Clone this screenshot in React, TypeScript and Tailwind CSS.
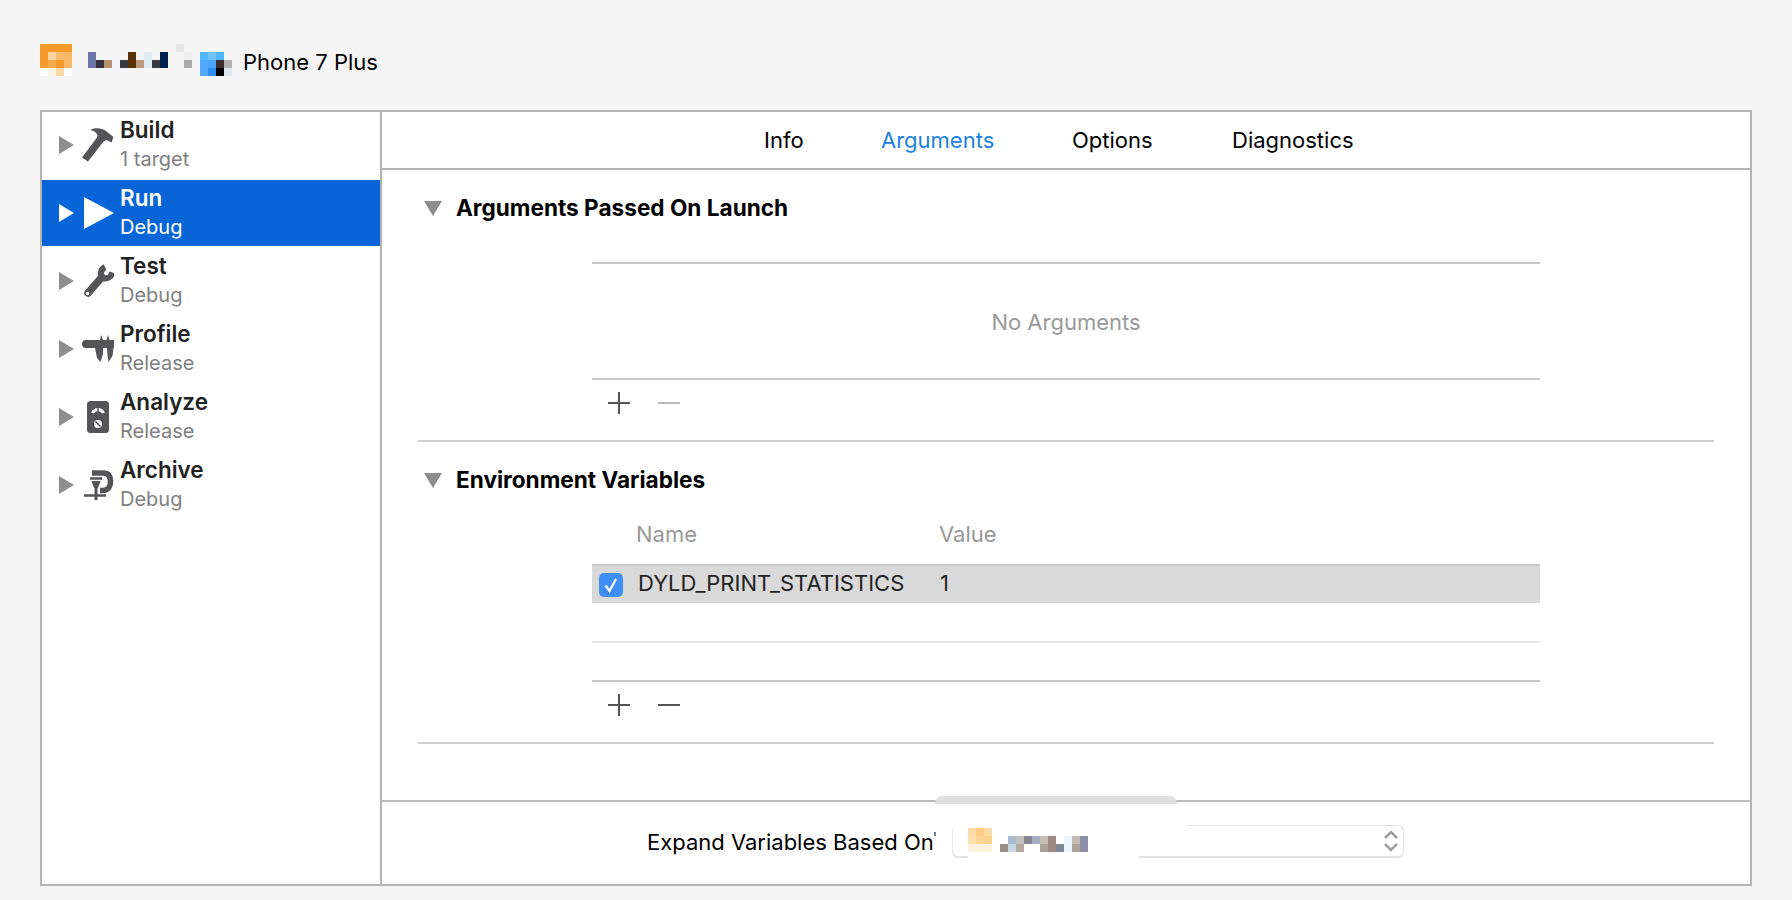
import React from "react";

const gray = "#555558";

function Mosaic({ width, height, cells, className }: { width: number; height: number; cells: [number, number, string][]; className?: string }) {
  return (
    <svg width={width} height={height} viewBox={`0 0 ${width} ${height}`} className={className} shapeRendering="crispEdges">
      {cells.map(([x, y, c], i) => (
        <rect key={i} x={x} y={y} width={8} height={8} fill={c} />
      ))}
    </svg>
  );
}

const headerCells: [number, number, string][] = [
  [0, 4, "#f79a2c"], [8, 4, "#f79a2c"], [16, 4, "#f79a2c"], [24, 4, "#f79a2c"],
  [0, 12, "#f79a2c"], [8, 12, "#fbd59f"], [16, 12, "#fbbb6d"], [24, 12, "#fab868"],
  [0, 20, "#f79a2c"], [8, 20, "#f9ac4e"], [16, 20, "#f79a2c"], [24, 20, "#fab868"],
  [0, 28, "#ffffff"], [8, 28, "#fff4e3"], [16, 28, "#fdd8a5"], [24, 28, "#ffffff"],
  [48, 12, "#6a79a8"], [48, 20, "#6a79a8"], [56, 20, "#33353c"], [64, 20, "#ba9372"], [72, 20, "#eef4f8"],
  [80, 20, "#3a3b40"], [88, 12, "#5a3007"], [88, 20, "#5a3007"], [96, 20, "#c19a7d"],
  [104, 12, "#dcecf4"], [104, 20, "#dcecf4"], [112, 20, "#3a3b40"], [120, 12, "#012050"], [120, 20, "#012050"],
  [136, 4, "#e6e6e6"], [144, 12, "#efefef"], [144, 20, "#aaaaaa"],
  [160, 12, "#4db8fb"], [168, 12, "#72c2f8"], [176, 12, "#4db8fb"],
  [160, 20, "#55a8fb"], [168, 20, "#4aa4f9"], [176, 20, "#3a3030"], [184, 20, "#b0b0b0"],
  [160, 28, "#55a8fb"], [168, 28, "#2d8ef5"], [176, 28, "#000000"], [184, 28, "#dde6ef"],
];

const selectCells: [number, number, string][] = [
  [0, 0, "#fbdca8"], [8, 0, "#fbcd85"], [16, 0, "#fbdca8"],
  [0, 8, "#fde0b0"], [8, 8, "#fcd594"], [16, 8, "#fcd38c"],
  [0, 16, "#fdf0dc"], [8, 16, "#fdf0dc"], [16, 16, "#fdf0dc"],
  [40, 8, "#a9bccd"], [48, 8, "#c4c1bd"], [56, 8, "#85858f"], [64, 8, "#9fb1c2"], [72, 8, "#c6bcb2"], [80, 8, "#9d8a83"], [96, 8, "#eaf6fc"], [104, 8, "#c4bbb3"], [112, 8, "#8a8ea6"],
  [32, 16, "#998d85"], [40, 16, "#c6d8e8"], [48, 16, "#b3a9a0"], [72, 16, "#aaa097"], [80, 16, "#9d8a83"], [88, 16, "#7f8699"], [96, 16, "#eaf6fc"], [104, 16, "#ada298"], [112, 16, "#8a8ea6"],
];

function Hammer() {
  return (
    <svg width="32" height="36" viewBox="0 0 32 36" fill={gray}>
      <path d="M9 2.500C13 0.500 20 0.500 24 4L31.500 10L29.500 15.500L24.500 13L21.500 14.500L6 34.500L0 30.500L15 10.500L15.500 8C14 5 12 3.500 9 3.500Z" />
    </svg>
  );
}
function Play() {
  return (
    <svg width="32" height="36" viewBox="0 0 32 36" fill="#fff">
      <path d="M2 2L32 18L2 34Z" />
    </svg>
  );
}
function Wrench() {
  return (
    <svg width="32" height="36" viewBox="0 0 32 36" fill="none">
      <path d="M6 30L20 14" stroke={gray} strokeWidth="7.500" strokeLinecap="round" />
      <path d="M23 4C17.500 7 17.500 14.500 22 15.500C25.500 16 29 14 30.500 9.500" stroke={gray} strokeWidth="6" />
      <circle cx="5.500" cy="30.500" r="1.800" fill="#fff" />
    </svg>
  );
}
function Caliper() {
  return (
    <svg width="32" height="36" viewBox="0 0 32 36" fill={gray}>
      <path d="M3.500 9H32V17H3.500C1.500 17 0 15 0 13C0 11 1.500 9 3.500 9Z" />
      <path d="M18 9L19 4L21 9ZM27.500 9L26 4L24.500 9Z" />
      <path d="M13 17H21V23L18.500 31L15 27ZM25 17H31.500L30.500 25L26.500 31L25.500 24Z" />
    </svg>
  );
}
function Meter() {
  return (
    <svg width="32" height="36" viewBox="0 0 32 36">
      <rect x="5" y="2" width="22" height="32" rx="3.500" fill={gray} />
      <path d="M10.500 14A6 6 0 0 1 21.500 14" stroke="#fff" strokeWidth="3" fill="none" />
      <path d="M16 8V12" stroke={gray} strokeWidth="1.500" />
      <circle cx="16" cy="25" r="4" fill="#fff" />
      <path d="M13.500 22.500L18.500 27.500" stroke={gray} strokeWidth="1.500" />
    </svg>
  );
}
function Clamp() {
  return (
    <svg width="32" height="36" viewBox="0 0 32 36" fill="none">
      <path d="M10 6H21C26 6 28.500 9 28.500 14.500C28.500 20 26 23.500 21 23.500H18" stroke={gray} strokeWidth="5.500" />
      <path d="M8 11.500H20" stroke={gray} strokeWidth="2.500" />
      <path d="M9.500 14H18.500L16 21H12Z" fill={gray} />
      <path d="M14 20V33" stroke={gray} strokeWidth="3" />
      <path d="M2 28.500H24" stroke={gray} strokeWidth="2.500" />
    </svg>
  );
}

const schemes = [
  { name: "Build", sub: "1 target", Icon: Hammer },
  { name: "Run", sub: "Debug", Icon: Play, active: true },
  { name: "Test", sub: "Debug", Icon: Wrench },
  { name: "Profile", sub: "Release", Icon: Caliper },
  { name: "Analyze", sub: "Release", Icon: Meter },
  { name: "Archive", sub: "Debug", Icon: Clamp },
];

function Row({ name, sub, Icon, active }: { name: string; sub: string; Icon: () => React.ReactElement; active?: boolean }) {
  return (
    <div className="h-[68px]">
      <div className={`flex items-center h-[66px] pl-[17px] ${active ? "bg-[#0765d7]" : ""}`}>
        <svg width="15" height="18" viewBox="0 0 15 18" className="mt-[-1px]">
          <path d="M0 0L15 9L0 18Z" fill={active ? "#ffffff" : "#8e8e8e"} />
        </svg>
        <div className="ml-[8px] w-[32px] flex justify-center"><Icon /></div>
        <div className="ml-[6px] flex flex-col">
          <div className={`text-[22.5px] leading-[28px] font-semibold h-[29px] ${active ? "text-white" : "text-[#222222]"}`}>{name}</div>
          <div className={`text-[20px] leading-[28px] h-[29px] ${active ? "text-white" : "text-[#808080]"}`}>{sub}</div>
        </div>
      </div>
    </div>
  );
}

function Disclosure({ title }: { title: string }) {
  return (
    <div className="flex items-center h-[30px] pl-[6px]">
      <svg width="18" height="15" viewBox="0 0 18 15"><path d="M0 0H18L9 15Z" fill="#8e8e8e" /></svg>
      <div className="ml-[14px] text-[22.6px] font-bold leading-[30px] text-black">{title}</div>
    </div>
  );
}

function PlusMinus({ minusDim }: { minusDim?: boolean }) {
  return (
    <div className="flex items-center h-[46px] pl-[16px] gap-[28px]">
      <svg width="22" height="22" viewBox="0 0 22 22"><path d="M0 11H22M11 0V22" stroke="#555555" strokeWidth="2" /></svg>
      <svg width="22" height="22" viewBox="0 0 22 22"><path d="M0 11H22" stroke={minusDim ? "#b9b9b9" : "#555555"} strokeWidth="2" /></svg>
    </div>
  );
}

export default function App() {
  return (
    <div className="h-[900px] w-[1792px] bg-[#f5f5f5] overflow-hidden font-['Inter',sans-serif] flex flex-col">
      <div className="h-[110px] pl-[40px] pt-[40px] flex items-start">
        <Mosaic width={192} height={40} cells={headerCells} />
        <div className="ml-[11px] mt-[2px] h-[40px] text-[22px] leading-[40px] text-black">Phone 7 Plus</div>
      </div>
      <div className="ml-[40px] w-[1712px] h-[776px] border-2 border-[#b4b4b4] bg-white flex">
        <div className="w-[340px] border-r-2 border-[#b4b4b4] shrink-0">
          {schemes.map((s) => <Row key={s.name} {...s} />)}
        </div>
        <div className="flex-1 flex flex-col min-w-0">
          <div className="h-[58px] border-b-2 border-[#b4b4b4] flex items-center pl-[382px] text-[22px] text-black">
            <span className="w-[117px]">Info</span>
            <span className="w-[191px] text-[#1a82e2]">Arguments</span>
            <span className="w-[160px]">Options</span>
            <span>Diagnostics</span>
          </div>
          <div className="pl-[36px] w-[1332px]">
            <div className="pt-[23px] h-[272px] border-b-2 border-[#d0d0d0]">
              <Disclosure title="Arguments Passed On Launch" />
              <div className="ml-[174px] w-[948px] mt-[39px]">
                <div className="h-[118px] pt-[2px] border-t-2 border-b-2 border-[#c8c8c8] flex items-center justify-center text-[22px] text-[#999999]">No Arguments</div>
                <PlusMinus minusDim />
              </div>
            </div>
            <div className="pt-[23px] h-[302px] border-b-2 border-[#d0d0d0]">
              <Disclosure title="Environment Variables" />
              <div className="ml-[174px] w-[948px]">
                <div className="flex h-[69px] pt-[10px] items-center text-[22px] text-[#999999]">
                  <span className="ml-[44px] w-[303px]">Name</span>
                  <span>Value</span>
                </div>
                <div className="h-[39px] bg-[#d9d9d9] border-t-2 border-[#c8c8c8] flex items-center text-[22px] text-[#222222]">
                  <div className="ml-[7px] mt-[1px] w-[24px] h-[24px] rounded-[5px] bg-[#3d8ff5] flex items-center justify-center">
                    <svg width="16" height="16" viewBox="0 0 16 16" fill="none"><path d="M2.500 8.500L6.500 14L13 2" stroke="#fff" strokeWidth="2.200" /></svg>
                  </div>
                  <span className="ml-[15px] w-[302px] mb-[2px]">DYLD_PRINT_STATISTICS</span>
                  <span className="mb-[2px]">1</span>
                </div>
                <div className="h-[40px] border-b-2 border-[#e6e6e6]" />
                <div className="h-[39px] border-b-2 border-[#c8c8c8]" />
                <PlusMinus />
              </div>
            </div>
          </div>
          <div className="mt-auto relative h-[84px] border-t-2 border-[#bdbdbd]">
            <div className="absolute left-[553px] top-[-6px] w-[242px] h-[8px] bg-[#e0e0e0] rounded-t-[10px]" />
            <div className="flex items-center h-full pl-[265px] pb-[3px]">
              <span className="relative text-[22px] text-black w-[305px] whitespace-nowrap mt-[2px]">
                Expand Variables Based On
                <span className="absolute left-[287px] top-[6px] w-[2px] h-[4px] bg-[#6b8090]" />
              </span>
              <div className="relative w-[452px] h-[33px] rounded-[6px] border border-b-2 border-[#e2e2e2] flex items-center justify-end pr-[5px]">
                <svg width="14" height="22" viewBox="0 0 14 22" fill="none">
                  <path d="M1 8L7 2L13 8M1 14L7 20L13 14" stroke="#a0a0a0" strokeWidth="2.500" />
                </svg>
                <div className="absolute left-[-18px] top-[-5px] w-[252px] h-[42px] bg-white [clip-path:polygon(7%_0,100%_0,100%_78%,81%_78%,81%_100%,13%_100%,13%_67%,7%_67%)]" />
                <div className="absolute left-[15px] top-[2px]">
                  <Mosaic width={120} height={24} cells={selectCells} />
                </div>
              </div>
            </div>
          </div>
        </div>
      </div>
    </div>
  );
}
